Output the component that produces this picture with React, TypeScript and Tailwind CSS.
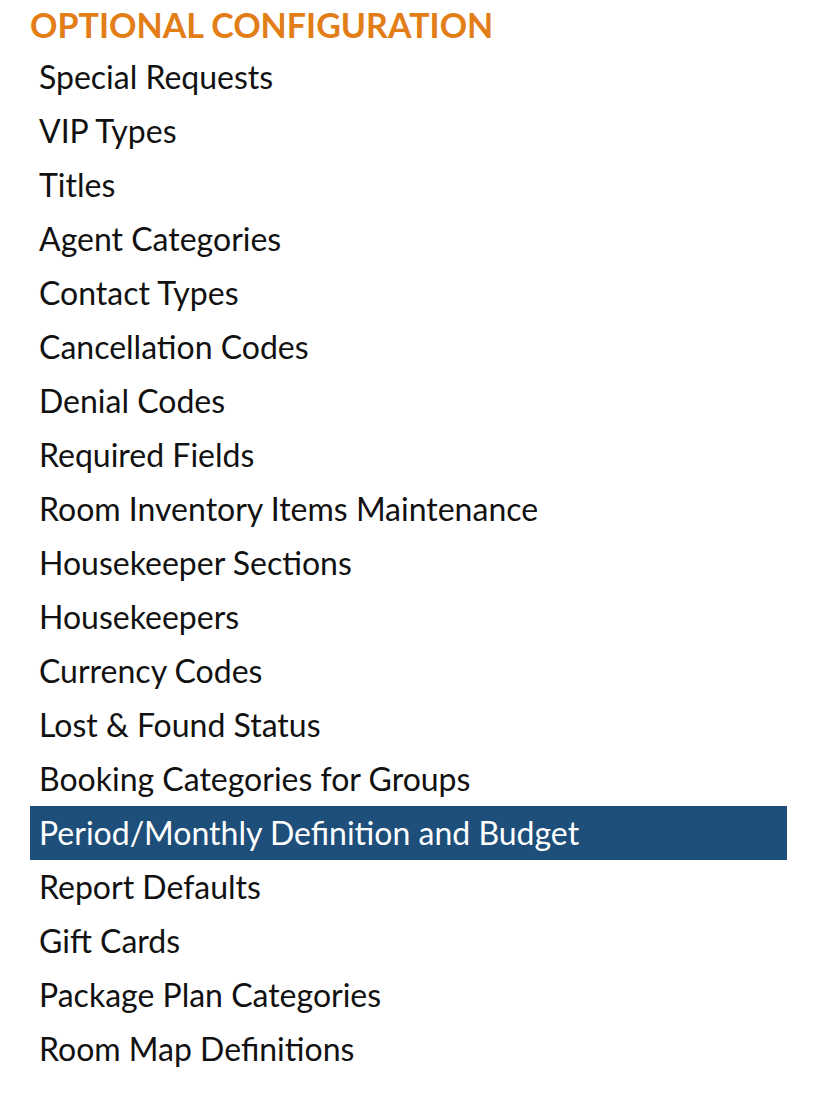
import React from "react";

const items = [
  "Special Requests",
  "VIP Types",
  "Titles",
  "Agent Categories",
  "Contact Types",
  "Cancellation Codes",
  "Denial Codes",
  "Required Fields",
  "Room Inventory Items Maintenance",
  "Housekeeper Sections",
  "Housekeepers",
  "Currency Codes",
  "Lost & Found Status",
  "Booking Categories for Groups",
  "Period/Monthly Definition and Budget",
  "Report Defaults",
  "Gift Cards",
  "Package Plan Categories",
  "Room Map Definitions",
];

export default function App() {
  return (
    <div className="min-h-[1098px] w-[819px] bg-white font-['Lato',sans-serif]">
      <div className="ml-[30px] w-[757px]">
        <h2 className="h-[50px] text-[34px] font-bold leading-[50px] text-[#e27d17]">
          OPTIONAL CONFIGURATION
        </h2>
        <ul>
          {items.map((it) => {
            const active = it === "Period/Monthly Definition and Budget";
            return (
              <li
                key={it}
                className={
                  active
                    ? "h-[54px] bg-[#1d4f7a] px-[9px] text-[32px] leading-[54px] text-white"
                    : "h-[54px] px-[9px] text-[32px] leading-[54px] text-[#111111]"
                }
              >
                {it}
              </li>
            );
          })}
        </ul>
      </div>
    </div>
  );
}
